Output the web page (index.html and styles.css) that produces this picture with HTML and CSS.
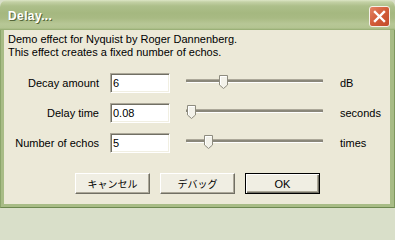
FILE: index.html
```html
<!DOCTYPE html>
<html>
<head>
<meta charset="utf-8">
<link rel="stylesheet" href="styles.css">
</head>
<body>
<div class="window">
  <div class="titlebar">
    <span class="title">Delay...</span>
    <div class="close">
      <svg width="21" height="21" viewBox="0 0 21 21">
        <path d="M6 6 L15 15 M15 6 L6 15" stroke="#fff" stroke-width="2.4" stroke-linecap="square"/>
      </svg>
    </div>
  </div>
  <div class="frame">
    <div class="content">
      <div class="desc">
        <div>Demo effect for Nyquist by Roger Dannenberg.</div>
        <div>This effect creates a fixed number of echos.</div>
      </div>
      <div class="rows">
        <div class="row">
          <span class="label">Decay amount</span>
          <div class="field">6</div>
          <div class="slider"><div class="track"></div><svg class="thumb" style="left:33px" width="9" height="14" viewBox="0 0 9 14"><polygon points="0.5,0.5 8.5,0.5 8.5,10 4.5,13.5 0.5,10" fill="#F3F2EA" stroke="#8E8C7F"/><path d="M1.5 10 V1.5 H7.5" stroke="#fff" fill="none"/></svg></div>
          <span class="unit">dB</span>
        </div>
        <div class="row">
          <span class="label">Delay time</span>
          <div class="field">0.08</div>
          <div class="slider"><div class="track"></div><svg class="thumb" style="left:1px" width="9" height="14" viewBox="0 0 9 14"><polygon points="0.5,0.5 8.5,0.5 8.5,10 4.5,13.5 0.5,10" fill="#F3F2EA" stroke="#8E8C7F"/><path d="M1.5 10 V1.5 H7.5" stroke="#fff" fill="none"/></svg></div>
          <span class="unit">seconds</span>
        </div>
        <div class="row">
          <span class="label">Number of echos</span>
          <div class="field">5</div>
          <div class="slider"><div class="track"></div><svg class="thumb" style="left:18px" width="9" height="14" viewBox="0 0 9 14"><polygon points="0.5,0.5 8.5,0.5 8.5,10 4.5,13.5 0.5,10" fill="#F3F2EA" stroke="#8E8C7F"/><path d="M1.5 10 V1.5 H7.5" stroke="#fff" fill="none"/></svg></div>
          <span class="unit">times</span>
        </div>
      </div>
      <div class="buttons">
        <div class="btn jp">キャンセル</div>
        <div class="btn jp">デバッグ</div>
        <div class="btn default">OK</div>
      </div>
    </div>
  </div>
</div>
</body>
</html>
```
FILE: styles.css
```css
* { box-sizing: border-box; }
html, body { margin: 0; padding: 0; }
body {
  width: 395px;
  height: 208px;
  background: #D9DFC9;
  font-family: "Liberation Sans", Arial, sans-serif;
  font-size: 11px;
  color: #000;
  overflow: hidden;
}
.window {
  width: 395px;
  height: 208px;
  display: flex;
  flex-direction: column;
}
.titlebar {
  height: 30px;
  flex: none;
  border-radius: 7px 7px 0 0;
  background: linear-gradient(to bottom, #DDE6C6 0px, #C3D1A5 2px, #ADBF8A 6px, #A5B880 13px, #A8BA83 18px, #B7C796 24px, #B3C491 28px, #93AA70 30px);
  display: flex;
  align-items: center;
  padding: 0 5px 0 8px;
  position: relative;
}
.title {
  color: #fff;
  font-weight: bold;
  font-size: 12px;
  letter-spacing: 0.4px;
  text-shadow: 1px 1px 0 #55663A;
  flex: 1;
  margin-top: 2px;
}
.close {
  width: 21px;
  height: 21px;
  border: 1px solid #F5F0E8;
  border-radius: 3px;
  background: linear-gradient(135deg, #E48466 0%, #D25C38 50%, #C24A2A 100%);
  margin-top: 2px;
  display: flex;
  align-items: center;
  justify-content: center;
}
.close svg { display: block; margin: -1px; }
.frame {
  flex: 1;
  background: #A8BC86;
  border-left: 1px solid #8CA56B;
  border-right: 1px solid #7E975E;
  border-bottom: 1px solid #6D874F;
  padding: 0 4px 3px 3px;
  display: flex;
}
.content {
  flex: 1;
  background: #ECE9D8;
  display: flex;
  flex-direction: column;
}
.desc {
  padding: 3px 0 0 4px;
  line-height: 13px;
}
.rows {
  margin-top: 14px;
  display: flex;
  flex-direction: column;
  gap: 10px;
}
.row {
  display: flex;
  align-items: center;
  height: 20px;
}
.label {
  width: 95px;
  text-align: right;
  flex: none;
}
.field {
  margin-left: 11px;
  width: 60px;
  height: 20px;
  background: #fff;
  border-top: 1px solid #ACA899;
  border-left: 1px solid #ACA899;
  border-right: 1px solid #fff;
  border-bottom: 1px solid #fff;
  box-shadow: inset 1px 1px 0 #716F64, inset -1px -1px 0 #F1EFE2;
  padding: 0 0 0 2px;
  line-height: 18px;
  flex: none;
}
.slider {
  margin-left: 16px;
  width: 137px;
  height: 20px;
  position: relative;
  flex: none;
}
.track {
  position: absolute;
  left: 0;
  right: 0;
  top: 6px;
  height: 4px;
  border-top: 1px solid #ACA899;
  border-bottom: 1px solid #fff;
  background: #8A877A;
  border-radius: 1px;
}
.thumb {
  position: absolute;
  top: 2px;
  display: block;
}
.unit {
  margin-left: 17px;
}
.buttons {
  margin-top: 20px;
  padding-left: 71px;
  display: flex;
  gap: 10px;
}
.btn {
  width: 75px;
  height: 21px;
  background: #F0EEE3;
  border-top: 1px solid #fff;
  border-left: 1px solid #fff;
  border-right: 1px solid #716F64;
  border-bottom: 1px solid #716F64;
  box-shadow: inset -1px -1px 0 #ACA899;
  display: flex;
  align-items: center;
  justify-content: center;
  font-size: 11px;
}
.jp {
  font-family: "Noto Sans CJK JP", sans-serif;
  font-size: 10px;
}
.default {
  border: 1px solid #000;
  box-shadow: inset 1px 1px 0 #fff, inset -1px -1px 0 #716F64, inset -2px -2px 0 #ACA899;
}
```
